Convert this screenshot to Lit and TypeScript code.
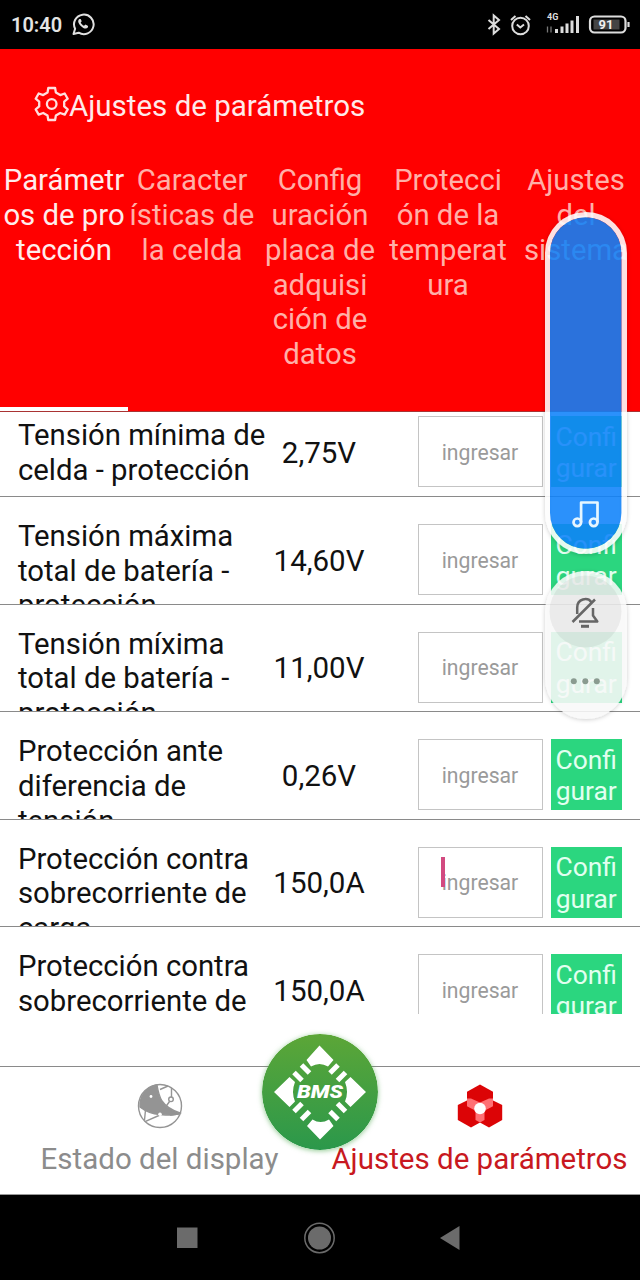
import { LitElement, html, css, svg } from "lit";
import { customElement } from "lit/decorators.js";

const tabs = [
  ["Parámetr", "os de pro", "tección"],
  ["Caracter", "ísticas de", "la celda"],
  ["Config", "uración", "placa de", "adquisi", "ción de", "datos"],
  ["Protecci", "ón de la", "temperat", "ura"],
  ["Ajustes", "del", "sistema"],
];

const rows = [
  { label: ["Tensión mínima de", "celda - protección"], value: "2,75V" },
  { label: ["Tensión máxima", "total de batería -", "protección"], value: "14,60V" },
  { label: ["Tensión míxima", "total de batería -", "protección"], value: "11,00V" },
  { label: ["Protección ante", "diferencia de", "tensión"], value: "0,26V" },
  { label: ["Protección contra", "sobrecorriente de", "carga"], value: "150,0A", focus: true },
  { label: ["Protección contra", "sobrecorriente de", "descarga"], value: "150,0A" },
];

const lines = (parts: string[]) => parts.map((p) => html`<span class="line">${p}</span>`);

@customElement("app-root")
export class AppRoot extends LitElement {
  static styles = css`
    :host {
      display: flex;
      flex-direction: column;
      position: relative;
      width: 640px;
      height: 1280px;
      overflow: hidden;
      background: #fff;
      color: #111;
      font: 29.5px/34.7px Roboto, sans-serif;
    }
    svg { display: block; flex: none; }
    .line { display: block; white-space: nowrap; }
    .status {
      flex: none;
      height: 49px;
      box-sizing: border-box;
      background: #000;
      color: #e4e4e4;
      display: flex;
      align-items: center;
      padding: 0 10px 0 11px;
    }
    .clock { font-size: 20px; font-weight: 600; width: 60px; padding-top: 1px; white-space: nowrap; }
    .grow { flex: 1; }
    .header {
      flex: none;
      height: 363px;
      box-sizing: border-box;
      background: #f00;
      border-bottom: 1px solid #a33;
      display: flex;
      flex-direction: column;
    }
    .title {
      height: 114px;
      display: flex;
      align-items: center;
      padding-left: 34px;
      color: #ffeaea;
    }
    .title svg { margin-top: -4px; }
    .tabs { flex: 1; display: grid; grid-template-columns: repeat(5, 1fr); }
    .tab {
      text-align: center;
      color: #ffb0a8;
      border-bottom: 4px solid transparent;
      display: flex;
      flex-direction: column;
      align-items: center;
      font-size: 29.3px;
      padding-top: 0.4px;
    }
    .tab.active { color: #ffecec; border-color: #fff; }
    .list { flex: none; height: 601.5px; overflow: hidden; }
    .scroll { margin-top: -22.6px; }
    .row {
      height: 107.6px;
      box-sizing: border-box;
      border-bottom: 1px solid #8a8a8a;
      display: flex;
      padding-left: 18px;
      overflow: hidden;
    }
    .label { width: 246px; display: flex; flex-direction: column; padding-top: 22px; font-size: 29.3px; }
    .label.short { padding-top: 29px; }
    .value { width: 110px; text-align: center; padding-top: 46.6px; }
    .field {
      width: 125px;
      height: 71px;
      margin: 27px 8px 0 43.5px;
      box-sizing: border-box;
      border: 1px solid #c4c4c4;
      color: #9a9a9a;
      font-size: 21.2px;
      display: flex;
      align-items: center;
      justify-content: center;
      padding-top: 3px;
      position: relative;
    }
    .caret { position: absolute; left: 22.5px; top: 9px; width: 3.5px; height: 30px; background: #d24a80; }
    .set {
      width: 71.5px;
      height: 71px;
      margin-top: 27px;
      background: #2bd67f;
      color: #e2fff0;
      font-size: 26.4px;
      line-height: 31.5px;
      text-align: center;
      box-sizing: border-box;
      padding-top: 5.5px;
    }
    .bottom {
      flex: none;
      margin-top: 52.5px;
      height: 129px;
      box-sizing: border-box;
      border-top: 1px solid #8a8a8a;
      border-bottom: 1px solid #999;
      display: grid;
      grid-template-columns: 319px 321px;
      position: relative;
    }
    .item { display: flex; flex-direction: column; align-items: center; padding-top: 16px; gap: 13px; color: #8c8c8c; white-space: nowrap; }
    .item.on { color: #c81820; }
    .bms {
      position: absolute;
      left: 262px;
      top: -33px;
      width: 116px;
      height: 116px;
      border-radius: 50%;
      box-shadow: 0 1px 5px rgba(60, 160, 60, 0.55);
    }
    .bmstext { font: italic 900 18px Roboto, sans-serif; }
    .nav { flex: 1; background: #000; display: flex; align-items: center; padding-left: 176px; }
    .volume { position: absolute; left: 541px; top: 208px; }
  `;

  gear() {
    return svg`<svg width="35" height="36" viewBox="0 0 35 36" fill="none" stroke="#ffdede" stroke-width="2.300" stroke-linejoin="round">
      <path d="M14.300 2h6.800l.8 4.600 4.300 2.500 4.500-1.600 3 5.200-3.500 3v4.700l3.500 3-3 5.200-4.500-1.600-4.300 2.500-.8 4.500h-6.800l-.8-4.500-4.300-2.500-4.500 1.600-3-5.200 3.500-3v-4.700l-3.500-3 3-5.200 4.500 1.600 4.300-2.500z"/>
      <circle cx="17.700" cy="18" r="4.800"/></svg>`;
  }

  volume() {
    return svg`<svg class="volume" width="92" height="520" viewBox="541 208 92 520">
      <defs>
        <filter id="sh" x="-20%" y="-10%" width="140%" height="120%"><feDropShadow dx="0" dy="1" stdDeviation="2" flood-color="#000" flood-opacity=".22"/></filter>
      </defs>
      <path filter="url(#sh)" d="M545 612a41 41 0 0 1 82 0v66a41 41 0 0 1-82 0z" fill="#fbfbfb" fill-opacity=".86"/>
      <circle cx="585.500" cy="611.500" r="36" fill="#000" fill-opacity=".055"/>
      <path filter="url(#sh)" fill-rule="evenodd" fill="#fff" fill-opacity=".87" d="M545 253a41 41 0 0 1 82 0v260a41 41 0 0 1-82 0zM550 253v260a35.700 35.700 0 0 0 71.400 0V253a35.700 35.700 0 0 0-71.400 0z"/>
      <rect x="550" y="217.300" width="71.400" height="331.400" rx="35.700" fill="#0e82fa" fill-opacity=".88"/>
      <g fill="none" stroke="#e6f6ff" stroke-width="2.700" stroke-linejoin="round">
        <circle cx="577.300" cy="522.300" r="3.800"/><circle cx="593.700" cy="522.300" r="3.800"/>
        <path d="M581.100 522.300V502.500h16.400v19.800"/>
      </g>
      <g fill="none" stroke="#666" stroke-width="2.500" stroke-linejoin="round">
        <path d="M577.200 614v-6.500c0-9 10.500-10.500 14-5.500M593 608v7.500l4.300 6H579M572.500 622l22.500-22.500"/>
        <path d="M581 626.300h8" stroke-width="3"/>
      </g>
      <g fill="#8a9b90"><circle cx="573.800" cy="681.300" r="3"/><circle cx="585.300" cy="681.300" r="3"/><circle cx="596.800" cy="681.300" r="3"/></g>
    </svg>`;
  }

  render() {
    return html`
      <div class="status">
        <span class="clock">10:40</span>
        <svg width="24" height="24" viewBox="0 0 24 24" fill="none" stroke="#e0e0e0" stroke-width="2">
          <path d="M2.500 21l1.600-5.200A9.800 9.800 0 1 1 7.700 19.700z" stroke-linejoin="round"/>
          <path d="M8.300 5.900c-2 1.500-1 4.500 1.500 7 2.500 2.600 5.500 3.700 7 1.600l.3-1.600-2.600-1.300-1.500 1.200c-1.600-.6-2.800-1.900-3.300-3.200l1-1.400-1-2.300z" fill="#e0e0e0" stroke="none"/>
        </svg>
        <span class="grow"></span>
        <svg width="143" height="24" viewBox="487 12.500 143 24" fill="none" stroke="#ddd">
          <path d="M488.500 19.500l10.500 9-5.300 4.500V15L499 19.500l-10.500 9" stroke-width="2"/>
          <circle cx="520.500" cy="25.500" r="8.300" stroke-width="2"/>
          <path d="M516.800 24l3.500 3 3.700-3M511 19.500l4.500-4M530 19.500l-4.500-4" stroke-width="2"/>
          <text x="547" y="19.800" font-size="9" font-weight="700" fill="#ddd" stroke="none">4G</text>
          <path d="M547.500 26v6M551 26v6" stroke="#777" stroke-width="1.300"/>
          <path d="M556.500 28.500v4M562 26v6.500M567 23v9.500M572 20v12.500M577.500 15.500v17" stroke-width="3"/>
          <rect x="590" y="16" width="35.500" height="16" rx="4.500" stroke-width="2.200"/>
          <rect x="593.500" y="19" width="26" height="10" fill="#444" stroke="none"/>
          <path d="M628.500 21.500v5" stroke-width="2.200"/>
          <text x="598.500" y="28.500" font-size="13" font-weight="700" fill="#f0f0f0" stroke="none">91</text>
        </svg>
      </div>
      <div class="header">
        <div class="title">${this.gear()}<span>Ajustes de parámetros</span></div>
        <div class="tabs">
          ${tabs.map((t, i) => html`<div class="tab ${i === 0 ? "active" : ""}">${lines(t)}</div>`)}
        </div>
      </div>
      <div class="list"><div class="scroll">
        ${rows.map((r) => html`<div class="row">
          <div class="label ${r.label.length === 2 ? "short" : ""}">${lines(r.label)}</div>
          <div class="value">${r.value}</div>
          <div class="field">ingresar${r.focus ? html`<span class="caret"></span>` : ""}</div>
          <div class="set">${lines(["Confi", "gurar"])}</div>
        </div>`)}
      </div></div>
      <div class="bottom">
        <div class="item">
          <svg width="46" height="46" viewBox="0 0 46 46" fill="none" stroke="#949494" stroke-width="1.400">
            <circle cx="23" cy="23" r="21.500"/>
            <path d="M3 24A21 21 0 0 1 20 2C21 8 22 13 25 18c4 6 9 9 18 12-7 3-13 2-20 1.500C15 31 8 28 3 24z" fill="#949494"/>
            <path d="M8.500 27l-1 10M8 38.700l15-6.700M23 6.500l8-3.500M34.500 5v9M32.500 18.500l-5 7M42 31l-9 1"/>
            <circle cx="34" cy="16.300" r="2.300" fill="#fff"/>
            <circle cx="23" cy="31.300" r="1.800" fill="#fff" stroke="none"/><circle cx="14" cy="13.500" r="1.400" fill="#fff" stroke="none"/>
          </svg>
          <span>Estado del display</span>
        </div>
        <div class="item on">
          <svg width="46" height="46" viewBox="0 0 46 46">
            <g fill="#dc0406">
              <path d="M23 1.500l13 7.300v14.500L23 30.500l-13-7.200V8.800z"/>
              <path d="M14 15.500l13.500 7v14.500L14 44.500.8 37V22z"/>
              <path d="M32 15.500l13.200 6.500V37L32 44.500 18.500 37V22.500z"/>
            </g>
            <path d="M10 15.500l4 0 9 4 9-4 4 0v7.800l-8.500 4.500V37L23 39.500 18.500 37v-9.200L10 23.300z" fill="#ff7074"/>
            <circle cx="23" cy="25.500" r="5.800" fill="#fff"/>
          </svg>
          <span>Ajustes de parámetros</span>
        </div>
        <svg class="bms" width="116" height="116" viewBox="0 0 116 116">
          <defs><linearGradient id="g" x2="0" y2="1"><stop stop-color="#5ca637"/><stop offset="1" stop-color="#2b984b"/></linearGradient></defs>
          <circle cx="58" cy="58" r="58" fill="url(#g)"/>
          <g fill="#fff">
            <path d="M57.500 11.500L71.500 26l-5.500 6.500q-8.500-5-17 0L44.500 26z"/>
            <path d="M58 105.500L45 92l5.500-6.500q8 5 16.500 0L71.500 92z"/>
            <path d="M12 58l15.500-15 5.500 5q-4 10 0 19.500L27.500 73z"/>
            <path d="M104 58L88.500 43l-5.500 5q4 10 0 19.500l5.500 5.500z"/>
          </g>
          <path stroke="#fff" stroke-width="5" d="M32 38.500l8 8M39.500 31l8 8M83.500 38.500l-8 8M76 31l-8 8M32 77.500l8-8M39.500 85.500l8-8M83.500 77.500l-8-8M76 85.500l-8-8"/>
          <text class="bmstext" x="35" y="63.500" fill="#fff" textLength="46" lengthAdjust="spacingAndGlyphs">BMS</text>
        </svg>
      </div>
      <div class="nav">
        <svg width="290" height="32" viewBox="176 1222 290 32" fill="#6b6b6b">
          <rect x="177" y="1227.500" width="20.500" height="20.500"/>
          <circle cx="319.500" cy="1238" r="11.500"/><circle cx="319.500" cy="1238" r="14.700" fill="none" stroke="#6b6b6b" stroke-width="1.500"/>
          <path d="M440 1238l19.500-12v24z"/>
        </svg>
      </div>
      ${this.volume()}
    `;
  }
}
